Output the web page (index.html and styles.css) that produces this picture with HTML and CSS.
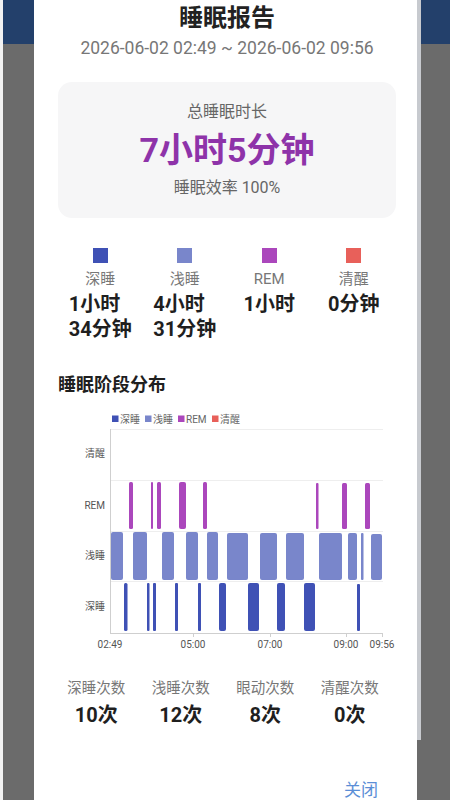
FILE: index.html
```html
<!DOCTYPE html>
<html lang="zh-CN">
<head>
    <meta charset="UTF-8">
    <meta name="viewport" content="width=device-width, initial-scale=1.0">
    <title>睡眠报告</title>
    <link rel="stylesheet" href="styles.css">
</head>
<body>
    <div class="side side-left"></div>

    <div class="dialog">
        <h2 class="title">睡眠报告</h2>
        <div class="range">2026-06-02 02:49 ~ 2026-06-02 09:56</div>

        <div class="summary">
            <div class="summary-label">总睡眠时长</div>
            <div class="summary-total">7小时5分钟</div>
            <div class="summary-label eff">睡眠效率 100%</div>
        </div>

        <div class="stages">
            <div class="stage">
                <span class="dot deep"></span>
                <span class="stage-name">深睡</span>
                <span class="stage-value">1小时<br>34分钟</span>
            </div>
            <div class="stage">
                <span class="dot light"></span>
                <span class="stage-name">浅睡</span>
                <span class="stage-value">4小时<br>31分钟</span>
            </div>
            <div class="stage">
                <span class="dot rem"></span>
                <span class="stage-name">REM</span>
                <span class="stage-value">1小时</span>
            </div>
            <div class="stage">
                <span class="dot awake"></span>
                <span class="stage-name">清醒</span>
                <span class="stage-value">0分钟</span>
            </div>
        </div>

        <h3 class="section">睡眠阶段分布</h3>

        <svg class="chart" width="338" height="250" viewBox="58 405 338 250">
            <!-- legend -->
            <rect x="112" y="415.5" width="6.5" height="6.5" fill="#3f51b5"/>
            <text class="lg" x="120" y="423">深睡</text>
            <rect x="145" y="415.5" width="6.5" height="6.5" fill="#7986cb"/>
            <text class="lg" x="153" y="423">浅睡</text>
            <rect x="178" y="415.5" width="6.5" height="6.5" fill="#ab47bc"/>
            <text class="lg" x="186" y="423">REM</text>
            <rect x="212" y="415.5" width="6.5" height="6.5" fill="#e8605a"/>
            <text class="lg" x="220" y="423">清醒</text>

            <!-- grid -->
            <g stroke="#eeeeee" stroke-width="1">
                <line x1="110" y1="429.5" x2="383" y2="429.5"/>
                <line x1="110" y1="480.5" x2="383" y2="480.5"/>
                <line x1="110" y1="531.5" x2="383" y2="531.5"/>
                <line x1="110" y1="581.5" x2="383" y2="581.5"/>
            </g>

            <!-- y labels -->
            <text class="ax" x="105" y="457" text-anchor="end">清醒</text>
            <text class="ax" x="105" y="509" text-anchor="end">REM</text>
            <text class="ax" x="105" y="559" text-anchor="end">浅睡</text>
            <text class="ax" x="105" y="610" text-anchor="end">深睡</text>

            <!-- REM -->
            <g fill="#ab47bc">
                <rect x="129" y="482" width="4" height="47" rx="1.5"/>
                <rect x="151" y="482" width="2" height="47" rx="1"/>
                <rect x="157" y="482" width="4" height="47" rx="1.5"/>
                <rect x="179" y="482" width="7" height="47" rx="2"/>
                <rect x="203" y="482" width="4" height="47" rx="1.5"/>
                <rect x="316" y="483" width="2.5" height="46" rx="1"/>
                <rect x="342" y="483" width="5" height="46" rx="1.5"/>
                <rect x="365" y="483" width="5" height="46" rx="1.5"/>
            </g>

            <!-- light -->
            <g fill="#7986cb">
                <rect x="111" y="532" width="12" height="48" rx="2"/>
                <rect x="133" y="532" width="14" height="48" rx="2"/>
                <rect x="162" y="532" width="12" height="48" rx="2"/>
                <rect x="186" y="532" width="12" height="48" rx="2"/>
                <rect x="207" y="532" width="11" height="48" rx="2"/>
                <rect x="227" y="533" width="21" height="47" rx="2"/>
                <rect x="260" y="533" width="17" height="47" rx="2"/>
                <rect x="286" y="533" width="18" height="47" rx="2"/>
                <rect x="319" y="533" width="23" height="47" rx="2"/>
                <rect x="348" y="533" width="9" height="47" rx="2"/>
                <rect x="361" y="533" width="2.5" height="47" rx="1"/>
                <rect x="371" y="534" width="11" height="46" rx="2"/>
            </g>

            <!-- deep -->
            <g fill="#3f51b5">
                <rect x="124" y="583" width="3.5" height="48" rx="1.5"/>
                <rect x="147" y="583" width="2.5" height="48" rx="1"/>
                <rect x="153" y="583" width="3" height="48" rx="1"/>
                <rect x="175" y="583" width="3" height="48" rx="1"/>
                <rect x="198" y="583" width="3" height="48" rx="1"/>
                <rect x="219" y="583" width="7" height="48" rx="2"/>
                <rect x="248" y="583" width="11" height="48" rx="2"/>
                <rect x="277" y="583" width="8" height="48" rx="2"/>
                <rect x="304" y="583" width="11" height="48" rx="2"/>
                <rect x="357" y="584" width="3" height="47" rx="1"/>
            </g>

            <!-- axes -->
            <g stroke="#cfcfcf" stroke-width="1">
                <line x1="110.5" y1="429" x2="110.5" y2="633"/>
                <line x1="110" y1="633.5" x2="383" y2="633.5"/>
                <line x1="193.5" y1="633" x2="193.5" y2="637"/>
                <line x1="270.5" y1="633" x2="270.5" y2="637"/>
                <line x1="346.5" y1="633" x2="346.5" y2="637"/>
                <line x1="382.5" y1="633" x2="382.5" y2="637"/>
            </g>

            <text class="ax" x="110" y="648" text-anchor="middle">02:49</text>
            <text class="ax" x="193" y="648" text-anchor="middle">05:00</text>
            <text class="ax" x="270" y="648" text-anchor="middle">07:00</text>
            <text class="ax" x="346" y="648" text-anchor="middle">09:00</text>
            <text class="ax" x="382" y="648" text-anchor="middle">09:56</text>
        </svg>

        <div class="counts">
            <div class="count">
                <span class="count-name">深睡次数</span>
                <span class="count-value">10次</span>
            </div>
            <div class="count">
                <span class="count-name">浅睡次数</span>
                <span class="count-value">12次</span>
            </div>
            <div class="count">
                <span class="count-name">眼动次数</span>
                <span class="count-value">8次</span>
            </div>
            <div class="count">
                <span class="count-name">清醒次数</span>
                <span class="count-value">0次</span>
            </div>
        </div>

        <div class="actions">
            <a href="#" class="close">关闭</a>
        </div>
    </div>

    <div class="edge"></div>
    <div class="side side-right"></div>
</body>
</html>
```

FILE: styles.css
```css
html, body {
    height: 800px;
    overflow: hidden;
}
body {
    margin: 0;
    display: flex;
    font-family: Roboto, "Noto Sans CJK SC", sans-serif;
    background: #6b6b6b;
    color: #1f1f1f;
}
.side {
    background: linear-gradient(#23406b 0, #23406b 44px, #6b6b6b 44px);
}
.side-left {
    width: 31px;
    border-left: 3px solid #f2f2f2;
}
.side-right {
    flex: 1;
}
.edge {
    width: 4px;
    background: linear-gradient(#c7cacf 0, #c7cacf 740px, #6b6b6b 740px);
}
.dialog {
    width: 383px;
    box-sizing: border-box;
    padding: 3px 21px 0 24px;
    background: white;
}
.title {
    margin: 0;
    text-align: center;
    font-size: 24px;
    line-height: 30px;
    font-weight: bold;
    color: #222;
}
.range {
    margin-top: 5px;
    text-align: center;
    font-size: 17.5px;
    line-height: 20px;
    color: #777;
}
.summary {
    margin-top: 24px;
    height: 136px;
    box-sizing: border-box;
    padding-top: 19px;
    background: #f6f6f7;
    border-radius: 14px;
    text-align: center;
}
.summary-label {
    font-size: 16px;
    line-height: 22px;
    color: #666;
}
.summary-total {
    margin: 5px 0;
    font-size: 34px;
    line-height: 44px;
    font-weight: bold;
    color: #8e33a9;
}
.stages {
    margin-top: 30px;
    display: grid;
    grid-template-columns: repeat(4, 1fr);
}
.stage, .count {
    display: flex;
    flex-direction: column;
    align-items: center;
}
.dot {
    width: 15px;
    height: 15px;
}
.deep { background: #3f51b5; }
.light { background: #7986cb; }
.rem { background: #ab47bc; }
.awake { background: #e8605a; }
.stage-name {
    margin-top: 6px;
    font-size: 15px;
    line-height: 20px;
    color: #777;
}
.stage-value {
    margin-top: 3px;
    font-size: 20px;
    line-height: 25px;
    font-weight: bold;
    color: #1f1f1f;
}
.section {
    margin: 30px 0 0;
    font-size: 18px;
    line-height: 26px;
    font-weight: bold;
    color: #1f1f1f;
}
.chart {
    display: block;
    margin-top: 7px;
}
.chart text {
    font-family: Roboto, "Noto Sans CJK SC", sans-serif;
}
.chart .lg {
    font-size: 10px;
    fill: #666;
}
.chart .ax {
    font-size: 10px;
    fill: #555;
}
.counts {
    margin: 24px 4px 0 -4px;
    display: grid;
    grid-template-columns: repeat(4, 1fr);
}
.count-name {
    font-size: 14.5px;
    line-height: 20px;
    color: #777;
}
.count-value {
    margin-top: 3px;
    font-size: 20px;
    line-height: 26px;
    font-weight: bold;
    color: #1f1f1f;
}
.actions {
    margin-top: 51px;
    display: flex;
    justify-content: flex-end;
    padding-right: 18px;
}
.close {
    font-size: 17px;
    line-height: 22px;
    color: #5b8ed6;
    text-decoration: none;
}
```
